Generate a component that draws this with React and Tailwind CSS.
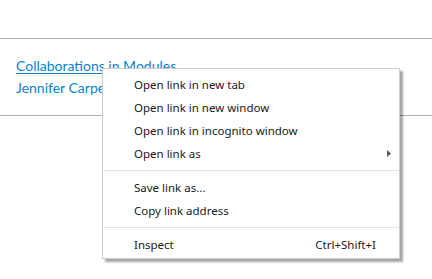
export default function App() {
  const base = "flex items-center h-[23px] pl-[31px] text-[11.5px] text-[#202020]";
  const row = base + " pr-[23px]";
  return (
    <div className="relative w-[432px] h-[279px] bg-white overflow-hidden">
      <div className="h-[38px]" />
      <div className="border-t border-b border-[#a8b1b8] pt-4 pb-4 px-4 font-['Lato',sans-serif] text-[14px] leading-[22px]">
        <div>
          <a className="text-[#0a82d2] underline underline-offset-[2px] decoration-1">Collaborations in Modules</a>
        </div>
        <div className="text-[#0a82d2]">Jennifer Carpenter</div>
      </div>

      <div className="absolute left-[102px] top-[68px] w-[298px] bg-white border border-[#cdcdcd] shadow-[3px_3px_2px_rgba(0,0,0,0.35)] pt-[4px] pb-[2px] font-['Noto_Sans',sans-serif]">
        <div className={row}>Open link in new tab</div>
        <div className={row}>Open link in new window</div>
        <div className={row}>Open link in incognito window</div>
        <div className={base + " justify-between pr-[8px]"}>
          <span>Open link as</span>
          <svg width="4" height="7" viewBox="0 0 4 7"><path d="M0 0 L4 3.5 L0 7 Z" fill="#5a5a5a" /></svg>
        </div>
        <div className="h-[11px] flex items-center"><div className="h-px w-full bg-[#e3e3e3]" /></div>
        <div className={row}>Save link as...</div>
        <div className={row}>Copy link address</div>
        <div className="h-[11px] flex items-center"><div className="h-px w-full bg-[#e3e3e3]" /></div>
        <div className={row + " justify-between"}>
          <span>Inspect</span>
          <span>Ctrl+Shift+I</span>
        </div>
      </div>
    </div>
  );
}
